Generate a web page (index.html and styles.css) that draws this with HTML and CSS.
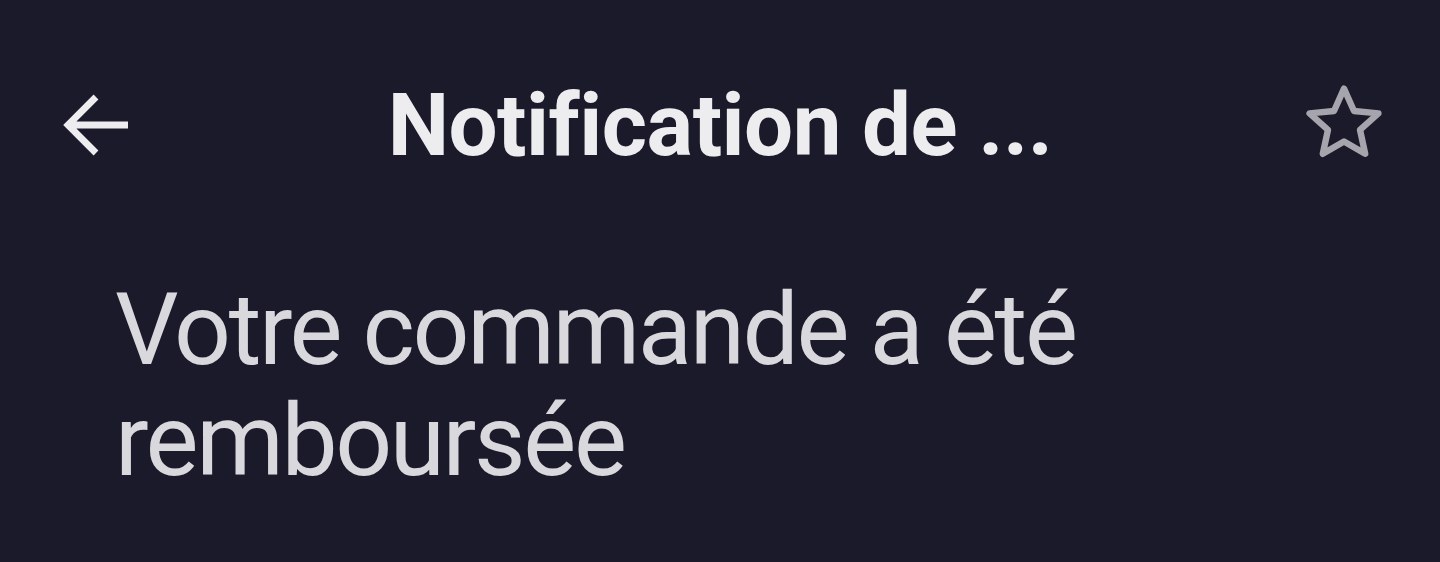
FILE: index.html
```html
<!DOCTYPE html>
<html lang="fr">
<head>
    <meta charset="UTF-8">
    <meta name="viewport" content="width=device-width, initial-scale=1.0">
    <title>Notification</title>
    <link rel="stylesheet" href="styles.css">
</head>
<body>

<div class="top-bar">
    <!-- Back button -->
    <button class="icon-button" aria-label="Retour">
        <svg viewBox="0 0 24 24" width="96" height="96">
            <path d="M20 12H5.5M12 5l-7 7 7 7" fill="none" stroke="#ededf0" stroke-width="1.7"/>
        </svg>
    </button>
    <h1 class="title">Notification de ...</h1>
    <!-- Star button -->
    <button class="icon-button" aria-label="Favori">
        <svg viewBox="0 0 24 24" width="96" height="96">
            <path d="M12 2.9l2.5 5.6 6.1.6-4.6 4.1 1.3 6-5.3-3.1-5.3 3.1 1.3-6-4.6-4.1 6.1-.6z" fill="none" stroke="#a6a5ad" stroke-width="1.6" stroke-linejoin="round"/>
        </svg>
    </button>
</div>

<div class="message">
    <p>Votre commande a été remboursée</p>
</div>

</body>
</html>
```

FILE: styles.css
```css
body {
    margin: 0;
    padding: 0;
    background-color: #1b1a2a;
    height: 100vh;
    font-family: 'Roboto', 'Noto Sans', sans-serif;
    overflow: hidden;
}

/* Header row */
.top-bar {
    display: flex;
    align-items: center;
    justify-content: space-between;
    padding: 77px 48px 0 48px;
}

.icon-button {
    width: 96px;
    height: 96px;
    padding: 0;
    border: none;
    background: none;
    display: flex;
}

.title {
    margin: 0;
    font-size: 87px;
    font-weight: 700;
    color: #ededf0;
    line-height: 96px;
    font-variant-ligatures: none;
    letter-spacing: -0.5px;
}

/* Notification body */
.message {
    padding: 0 320px 0 115px;
}

.message p {
    margin: 0;
    margin-top: 101px;
    font-size: 100px;
    font-weight: 400;
    line-height: 111px;
    letter-spacing: -2.4px;
    color: #d9d8dd;
}
```
